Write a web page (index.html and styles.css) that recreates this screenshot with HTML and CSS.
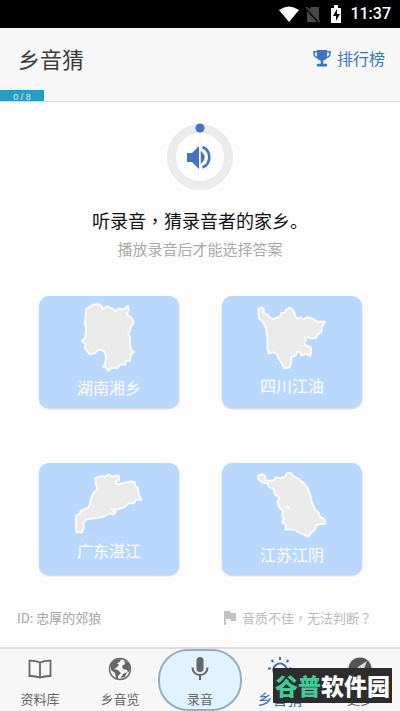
FILE: index.html
```html
<!DOCTYPE html>
<html lang="zh-CN">
<head>
<meta charset="utf-8">
<meta name="viewport" content="width=device-width, initial-scale=1">
<title>乡音猜</title>
<link rel="stylesheet" href="styles.css">
</head>
<body>
<div class="status">
  <svg class="status-wifi" viewBox="0 0 20 16"><path d="M0 4Q10-3 20 4L10 16Z" fill="#fff"/></svg>
  <svg class="status-sim" viewBox="0 0 16 18"><path d="M6 2h8v14L4 4ZM2 6l10 11H2Z" fill="#484848"/><path d="M1 2l14 15" stroke="#484848" stroke-width="1.600"/></svg>
  <svg class="status-battery" viewBox="0 0 12 18"><path d="M1 3h3V0h4v3h3v15H1Z" fill="#fff"/><path d="M7 4L3 11h3v5l4-7H7Z" fill="#000"/></svg>
  <span class="status-time">11:37</span>
</div>
<header class="header">
  <div class="header-row">
    <h1 class="title">乡音猜</h1>
    <a class="rank" href="#rank">
      <svg class="rank-icon" viewBox="0 0 18 18"><path d="M4 1h10v6.500q0 3.500-3.700 4v3.300H14V17.500H4v-2.700h3.700v-3.300q-3.700-.5-3.700-4Z" fill="#3a75c4"/><path d="M4.500 2.800H1v1.700q0 3.500 4 4.300M13.500 2.800H17v1.700q0 3.500-4 4.300" fill="none" stroke="#3a75c4" stroke-width="1.500"/></svg>
      <span>排行榜</span>
    </a>
  </div>
  <div class="progress"><div class="progress-bar">0 / 8</div></div>
</header>
<main class="main">
  <button class="player" type="button" aria-label="播放录音">
    <svg viewBox="0 0 68 68"><circle cx="34" cy="35" r="28.500" fill="none" stroke="#ebebeb" stroke-width="9"/><circle cx="34" cy="6" r="4.600" fill="#4574bd"/><path d="M21 31h5l7-7v23l-7-7h-5Z" fill="#4574bd"/><path d="M35.500 30.500q5 4.800 0 9.800Z" fill="#4574bd" stroke="#4574bd" stroke-width="1.500"/><path d="M36.500 25c9 3.500 9 17 0 20.500" fill="none" stroke="#4574bd" stroke-width="2.600"/></svg>
  </button>
  <h2 class="question">听录音<span class="centered" lang="zh-TW">，</span>猜录音者的家乡。</h2>
  <p class="hint">播放录音后才能选择答案</p>
  <div class="choices">
    <button class="card" type="button">
      <svg class="map" width="74" height="73" viewBox="126 42 222 219"><path d="M168 85L168 72 180 65 192 58 205 57 214 62 218 72 232 64 243 70 252 72 256 80 266 70 280 74 294 62 296 78 290 88 304 98 312 112 304 124 300 136 294 146 300 156 300 180 304 196 313 200 303 208 300 228 288 228 285 240 272 238 262 250 245 248 235 258 228 248 220 246 226 232 228 214 222 198 205 194 196 204 180 208 174 202 164 188 167 178 155 168 166 158 168 130 164 112 166 98Z"/></svg>
      <span class="place">湖南湘乡</span>
    </button>
    <button class="card" type="button">
      <svg class="map" width="74" height="71" viewBox="135 42 222 213"><path d="M145 72L156 67 162 74 160 84 172 88 180 98 192 102 200 97 208 98 214 84 226 82 228 74 240 68 250 76 256 92 262 102 272 96 280 104 292 96 305 100 314 104 320 110 345 110 336 126 334 140 322 150 316 160 302 160 290 156 284 172 288 182 302 186 304 200 300 214 288 206 274 212 272 202 262 200 256 212 244 216 244 234 238 248 222 250 216 236 206 220 200 206 188 202 176 206 172 190 172 160 168 130 158 110 146 100Z"/></svg>
      <span class="place">四川江油</span>
    </button>
    <button class="card" type="button">
      <svg class="map" width="74" height="69" viewBox="126 48 222 207"><path d="M138 198L150 190 152 182 176 172 182 150 190 128 202 118 198 104 196 84 212 78 226 80 236 73 246 80 266 76 268 90 256 96 262 104 284 98 304 94 314 96 316 108 324 114 326 130 334 150 318 148 312 160 296 160 282 172 262 178 244 178 258 186 250 194 238 190 222 200 200 204 184 206 170 208 160 218 162 232 156 248 138 246Z"/></svg>
      <span class="place">广东湛江</span>
    </button>
    <button class="card" type="button">
      <svg class="map" width="74" height="73" viewBox="135 48 222 219"><path d="M144 78L156 72 166 78 166 90 178 92 190 92 196 82 210 84 226 80 230 70 242 68 250 78 268 88 282 100 294 116 302 138 306 158 316 180 326 188 330 200 342 206 346 222 332 222 318 226 316 238 304 248 294 260 278 252 264 246 256 240 238 238 226 238 228 226 216 216 222 206 216 196 220 184 208 172 202 158 208 142 194 132 192 118 178 112 172 100 158 98 146 88Z"/><circle cx="234" cy="172" r="3"/></svg>
      <span class="place">江苏江阴</span>
    </button>
  </div>
  <div class="meta">
    <span class="user">ID: 忠厚的郊狼</span>
    <a class="report" href="#report">
      <svg class="flag" viewBox="0 0 12 14"><path d="M0 0h6l1 2h5v8H7L6 8H2v6H0Z" fill="#c2c2c2"/></svg>
      <span>音质不佳<span class="centered" lang="zh-TW">，</span>无法判断<span class="centered" lang="zh-TW">？</span></span>
    </a>
  </div>
</main>
<nav class="tabs">
  <a class="tab" href="#library">
    <svg class="tab-icon" viewBox="0 0 24 24" fill="none" stroke="#666" stroke-width="1.800"><path d="M12 5.500Q7 3.500 1.500 3.700V19q6-.2 10.500 1.600Q16.500 18.800 22.500 19V3.700Q17 3.500 12 5.500ZM12 5.500V20.500"/></svg>
    <span>资料库</span>
  </a>
  <a class="tab" href="#browse">
    <svg class="tab-icon" viewBox="0 0 24 24"><circle cx="12" cy="12" r="10.500" fill="none" stroke="#666" stroke-width="1.400"/><path d="M3 7l4-4 6-1-1 3-3 1 2 2-3 3-2 1 4 1 3 3-3 3v3l-2-1-1-5-4-3ZM16 3l5 4 1 6-2 3-1-3-4-1-1-3 3-2ZM15 17l4-2-2 5-4 1Z" fill="#666"/></svg>
    <span>乡音览</span>
  </a>
  <a class="tab tab-record" href="#record">
    <svg class="tab-icon" viewBox="0 0 24 24"><rect x="8.500" y="0" width="7" height="15" rx="3.500" fill="#666"/><path d="M4.500 10.500c0 10 15 10 15 0M12 18v5" fill="none" stroke="#666" stroke-width="2"/></svg>
    <span>录音</span>
  </a>
  <a class="tab tab-active" href="#guess">
    <svg class="tab-icon" viewBox="0 0 24 24" fill="none" stroke="#3a6dba" stroke-width="2"><path d="M8 20.500q0-2-1.500-3.500a6.700 6.700 0 1 1 11 0q-1.500 1.500-1.500 3.500ZM9 23h6"/><path d="M12 0v3M3.500 3l2 2M20.500 3l-2 2M0 11.500h3M24 11.500h-3"/></svg>
    <span>乡音猜</span>
  </a>
  <a class="tab" href="#more">
    <svg class="tab-icon" viewBox="0 0 24 24"><circle cx="12" cy="12" r="11.500" fill="#555"/><path d="M19 4l-4 10-9 6 4-10Z" fill="#ddd"/><circle cx="12.500" cy="12" r="1.500" fill="#555"/></svg>
    <span>更多</span>
  </a>
  <div class="watermark"><span class="watermark-accent">谷普</span>软件园</div>
</nav>
</body>
</html>
```
FILE: styles.css
```css
* {
  box-sizing: border-box;
}

body {
  margin: 0;
  min-height: 100vh;
  display: flex;
  flex-direction: column;
  background: #fdfdfd;
  color: #333;
  font-family: "Noto Sans CJK SC", sans-serif;
}

a {
  color: inherit;
  text-decoration: none;
}

button {
  border: 0;
  padding: 0;
  font: inherit;
  cursor: pointer;
}

svg {
  display: block;
}

.status {
  display: flex;
  align-items: center;
  justify-content: flex-end;
  height: 28px;
  padding: 0 9px;
  background: #000;
  color: #fff;
}

.status-wifi {
  width: 20px;
  height: 16px;
  margin-right: 6px;
}

.status-sim {
  width: 16px;
  height: 18px;
  margin-right: 9px;
}

.status-battery {
  width: 12px;
  height: 18px;
  margin-right: 8px;
}

.status-time {
  font: 500 16px/28px Roboto, sans-serif;
}

.header {
  background: #f7f7f7;
  border-bottom: 1px solid #d4d4d4;
}

.header-row {
  display: flex;
  align-items: center;
  justify-content: space-between;
  height: 62px;
  padding: 0 15px 2px 18px;
}

.title {
  margin: 0;
  font-size: 22px;
  font-weight: 400;
  line-height: 32px;
  color: #3c3c3c;
}

.rank {
  display: flex;
  align-items: center;
  gap: 6px;
  font-size: 16px;
  line-height: 24px;
  color: #3a75c4;
}

.rank-icon {
  width: 18px;
  height: 18px;
}

.progress-bar {
  width: 11%;
  height: 11px;
  background: #2b9ac8;
  color: #d8f0fa;
  font: 9px/14px "Liberation Sans", sans-serif;
  text-align: center;
  overflow: hidden;
}

.main {
  flex: 1;
  display: flex;
  flex-direction: column;
  align-items: center;
  padding-top: 20px;
}

.player {
  width: 68px;
  height: 68px;
  background: none;
}

.question {
  margin: 16px 0 0;
  font-size: 18px;
  font-weight: 400;
  line-height: 28px;
  color: #111;
}

.centered {
  font-family: "Noto Sans CJK TC", sans-serif;
}

.hint {
  margin: 4px 0 0;
  font-size: 15px;
  line-height: 22px;
  color: #aaa;
}

.choices {
  align-self: stretch;
  display: grid;
  grid-template-columns: 1fr 1fr;
  gap: 55px 43px;
  padding: 36px 38px 0 39px;
}

.card {
  display: flex;
  flex-direction: column;
  align-items: center;
  justify-content: flex-start;
  height: 112px;
  padding-top: 3px;
  border-radius: 10px;
  background: #bad7fe;
  box-shadow: 0 1px 2px #ccc;
  color: #fff;
}

.map {
  fill: #eaeaea;
  stroke: #fff;
  stroke-width: 5;
  stroke-linejoin: round;
}

.place {
  margin-top: 3px;
  font-size: 16px;
  line-height: 24px;
}

.meta {
  align-self: stretch;
  display: flex;
  align-items: center;
  justify-content: space-between;
  margin-top: 33px;
  padding: 0 28px 0 17px;
  font-size: 13px;
  line-height: 20px;
  color: #a4a4a4;
}

.report {
  display: flex;
  align-items: center;
  gap: 6px;
  color: #bbb;
}

.flag {
  width: 12px;
  height: 14px;
}

.tabs {
  position: relative;
  display: grid;
  grid-template-columns: repeat(5, 1fr);
  height: 64px;
  border-top: 2px solid #dedede;
  background: #f7f7f7;
}

.tab {
  display: flex;
  flex-direction: column;
  align-items: center;
  gap: 8px;
  padding-top: 8px;
  font-size: 13px;
  line-height: 20px;
  color: #666;
}

.tab-icon {
  width: 24px;
  height: 24px;
}

.tab-record {
  height: 62px;
  margin: 0 -2px;
  padding-top: 6px;
  border: 2px solid #95afbf;
  border-radius: 30px;
  background: #e1f3fe;
}

.tab-active {
  font-size: 15px;
  color: #3a6dba;
}

.watermark {
  position: absolute;
  right: 8px;
  bottom: 8px;
  padding: 0 2px;
  background: #2d2d2d;
  color: #fff;
  font-size: 23px;
  font-weight: 900;
  line-height: 35px;
  white-space: nowrap;
}

.watermark-accent {
  color: #45c99b;
}
```
